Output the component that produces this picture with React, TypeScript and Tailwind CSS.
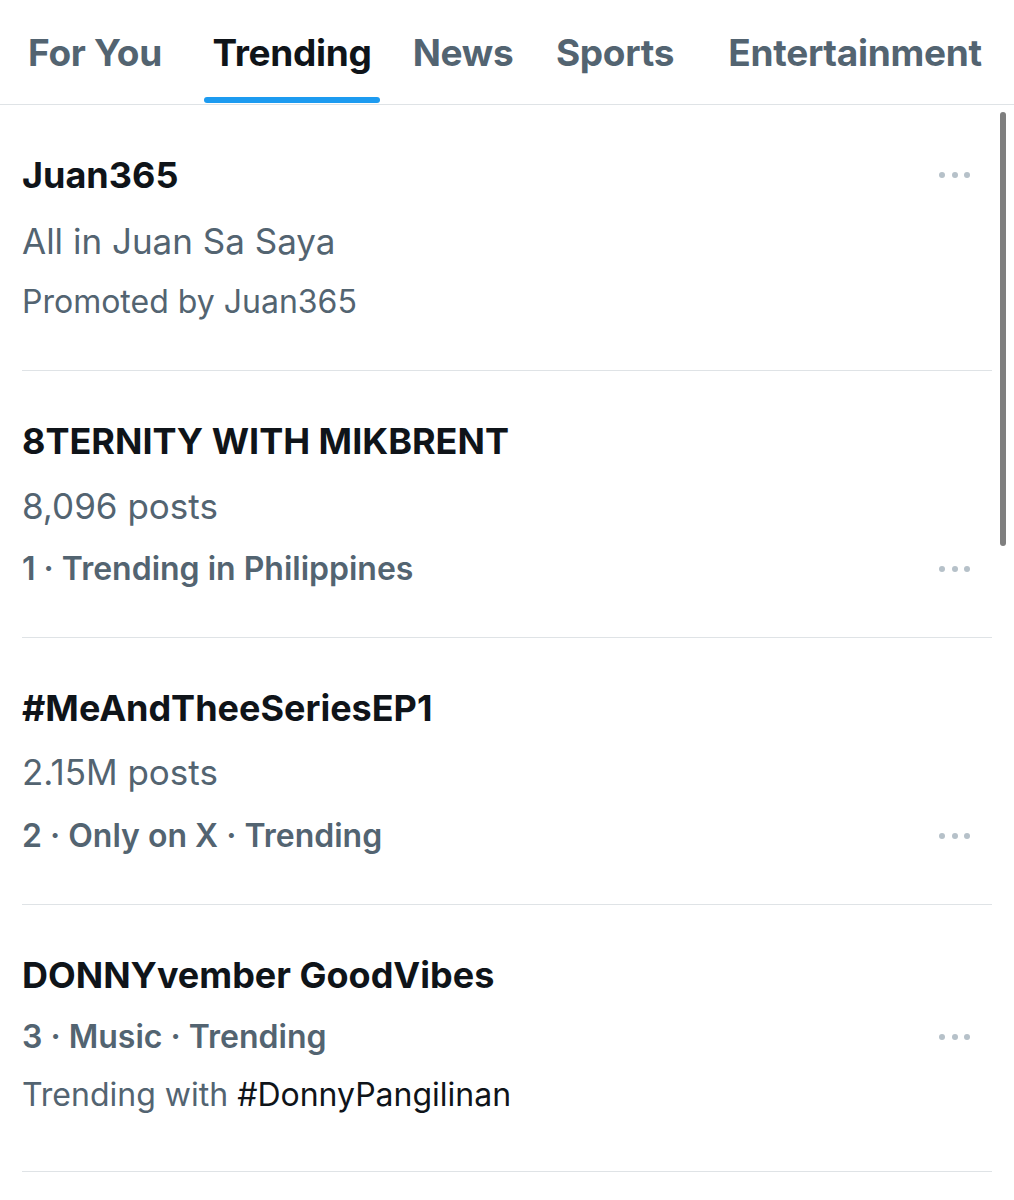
import React from "react";

const font = { fontFamily: "Inter, 'Noto Sans', 'Liberation Sans', sans-serif" };

function Dots() {
  return (
    <div className="flex items-center gap-[6.5px] pr-[22px]">
      <span className="block h-[6px] w-[6px] rounded-full bg-[#b6c1c9]" />
      <span className="block h-[6px] w-[6px] rounded-full bg-[#b6c1c9]" />
      <span className="block h-[6px] w-[6px] rounded-full bg-[#b6c1c9]" />
    </div>
  );
}

function Line({ h, children, dots, className }: { h: string; children: React.ReactNode; dots?: boolean; className: string }) {
  return (
    <div className={`flex items-center justify-between ${h}`}>
      <div className={`whitespace-nowrap ${className}`}>{children}</div>
      {dots && <Dots />}
    </div>
  );
}

const tabs = [
  { label: "For You", w: "w-[190px]" },
  { label: "Trending", w: "w-[204px]", active: true },
  { label: "News", w: "w-[138px]" },
  { label: "Sports", w: "w-[166px]" },
  { label: "Entertainment", w: "w-[314px]" },
];

const title = "text-[36px] font-bold text-[#0f1419] leading-none";
const sub = "text-[35px] font-normal text-[#536471] leading-none";
const meta = "text-[32px] font-semibold text-[#536471] leading-none";
const metaReg = "text-[32px] font-normal text-[#536471] leading-none";

export default function App() {
  return (
    <div className="relative h-[1200px] w-[1014px] overflow-hidden bg-white" style={font}>
      <div className="flex h-[105px] border-b border-[#dfe3e6]">
        {tabs.map((t) => (
          <div key={t.label} className={`flex flex-col items-center ${t.w}`}>
            <div
              className={`flex h-[97px] items-center pt-[8px] text-[37px] font-bold tracking-[-0.3px] ${
                t.active ? "text-[#0f1419]" : "text-[#536471]"
              }`}
            >
              {t.label}
            </div>
            {t.active && <div className="h-[6px] w-[176px] rounded-full bg-[#1d9bf0]" />}
          </div>
        ))}
      </div>

      <div className="ml-[22px] w-[970px]">
        <div className="h-[266px] border-b border-[#dfe3e6] pt-[38px]">
          <Line h="h-[64px]" className={title} dots>Juan365</Line>
          <Line h="h-[68px]" className={sub}>All in Juan Sa Saya</Line>
          <Line h="h-[54px]" className={metaReg}>Promoted by Juan365</Line>
        </div>
        <div className="h-[267px] border-b border-[#dfe3e6] pt-[38px]">
          <Line h="h-[64px]" className={title}>8TERNITY WITH MIKBRENT</Line>
          <Line h="h-[66px]" className={sub}>8,096 posts</Line>
          <Line h="h-[60px]" className={meta} dots>1 · Trending in Philippines</Line>
        </div>
        <div className="h-[267px] border-b border-[#dfe3e6] pt-[38px]">
          <Line h="h-[64px]" className={title}>#MeAndTheeSeriesEP1</Line>
          <Line h="h-[64px]" className={sub}>2.15M posts</Line>
          <Line h="h-[64px]" className={meta} dots>2 · Only on X · Trending</Line>
        </div>
        <div className="h-[267px] border-b border-[#dfe3e6] pt-[38px]">
          <Line h="h-[64px]" className={title}>DONNYvember GoodVibes</Line>
          <Line h="h-[60px]" className={meta} dots>3 · Music · Trending</Line>
          <Line h="h-[56px]" className={metaReg}>
            Trending with <span className="text-[#0f1419]">#DonnyPangilinan</span>
          </Line>
        </div>
      </div>

      <div className="absolute left-[1000px] top-[112px] h-[434px] w-[6px] rounded-full bg-[#7f7f7f]" />
    </div>
  );
}
